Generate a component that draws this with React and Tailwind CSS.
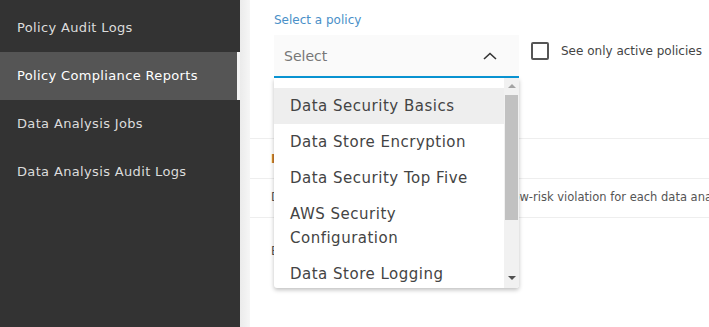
import React from 'react';

const navItems = [
    { label: 'Policy Audit Logs' },
    { label: 'Policy Compliance Reports', active: true },
    { label: 'Data Analysis Jobs' },
    { label: 'Data Analysis Audit Logs' },
];

const policies = [
    'Data Security Basics',
    'Data Store Encryption',
    'Data Security Top Five',
    'AWS Security Configuration',
    'Data Store Logging',
];

const font = { fontFamily: '"DejaVu Sans", "Open Sans", sans-serif' };

const Sidebar = () => (
    <div className="w-[240px] shrink-0 bg-[#333333] pt-[4px]">
        {navItems.map((item) => (
            <div
                key={item.label}
                className={
                    item.active
                        ? 'flex h-[48px] items-center border-r-[3px] border-[#f4f4f4] bg-[#555555] px-[17px] text-[13px] tracking-[0.35px] text-white'
                        : 'flex h-[48px] items-center px-[17px] text-[13px] tracking-[0.35px] text-[#dcdcdc]'
                }
            >
                {item.label}
            </div>
        ))}
    </div>
);

const PolicyDropdown = () => (
    <div className="absolute left-[24px] top-[78px] flex h-[210px] w-[245px] overflow-hidden rounded-b-[3px] bg-white shadow-[0_2px_4px_rgba(0,0,0,0.25)]">
        <div className="flex-1 pt-[10px]">
            {policies.map((p, i) => (
                <div
                    key={p}
                    className={
                        'px-[16px] py-[6px] text-[15px] leading-[24px] tracking-[0.5px] text-[#444444] ' +
                        (i === 0 ? 'bg-[#eeeeee]' : '')
                    }
                >
                    {p}
                </div>
            ))}
        </div>
        <div className="relative w-[15px] shrink-0 bg-[#f1f1f1]">
            <div className="absolute left-[4px] top-[6px] h-0 w-0 border-x-[4px] border-b-[4px] border-x-transparent border-b-[#a3a3a3]" />
            <div className="absolute left-[1px] top-[17px] h-[125px] w-[13px] bg-[#c1c1c1]" />
            <div className="absolute bottom-[8px] left-[4px] h-0 w-0 border-x-[4px] border-t-[4px] border-x-transparent border-t-[#505050]" />
        </div>
    </div>
);

const App = () => {
    return (
        <div className="flex h-[327px] w-[709px] overflow-hidden bg-white" style={font}>
            <Sidebar />
            <div className="w-[10px] shrink-0 bg-gradient-to-r from-[#ebebeb] to-[#f6f6f6]" />

            <div className="relative flex-1">
                <div className="px-[24px] pt-[12px]">
                    <div className="text-[12px] leading-[16px] text-[#4a90c8]">Select a policy</div>
                    <div className="mt-[7px] flex items-start">
                        <div className="flex h-[43px] w-[245px] items-center justify-between border-b-2 border-[#0a96d6] bg-[#fafafa] pl-[10px] pr-[22px] pt-[1px]">
                            <span className="text-[14px] text-[#777777]">Select</span>
                            <svg width="14" height="8" viewBox="0 0 14 8" fill="none">
                                <path d="M1 7L7 1.5L13 7" stroke="#333333" strokeWidth="1.6" />
                            </svg>
                        </div>
                        <div className="ml-[12px] mt-[7px] flex items-center">
                            <div className="h-[18px] w-[18px] rounded-[2px] border-2 border-[#555555]" />
                            <span className="ml-[12px] text-[12px] text-[#444444]">See only active policies</span>
                        </div>
                    </div>
                </div>

                <div className="mt-[60px] border-t border-[#eeeeee]">
                    <div className="flex h-[40px] items-center border-b border-[#eeeeee] px-[21px] text-[12px] font-semibold text-[#c0762b]">
                        Policy
                    </div>
                    <div className="flex h-[39px] items-center overflow-hidden whitespace-nowrap border-b border-[#eeeeee] pl-[21px] text-[11.5px] text-[#555555]">
                        Displays the highest-risk violation, and a low-risk violation for each data analysis job
                    </div>
                    <div className="h-[66px] px-[21px] pt-[26px] text-[12px] leading-[14px] text-[#555555]">
                        Encryption
                    </div>
                </div>

                <PolicyDropdown />
            </div>
        </div>
    );
};

export default App;
